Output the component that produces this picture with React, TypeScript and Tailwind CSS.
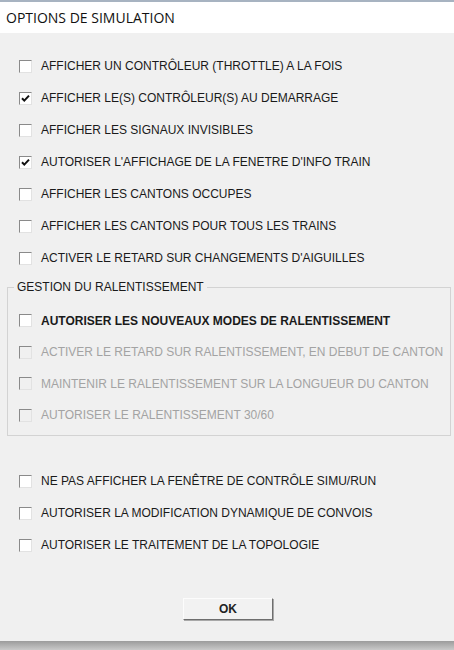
import React from 'react';

type Opt = { label: string; checked?: boolean; disabled?: boolean; strong?: boolean };

const topOptions: Opt[] = [
  { label: 'AFFICHER UN CONTRÔLEUR (THROTTLE) A LA FOIS' },
  { label: 'AFFICHER LE(S) CONTRÔLEUR(S) AU DEMARRAGE', checked: true },
  { label: 'AFFICHER LES SIGNAUX INVISIBLES' },
  { label: "AUTORISER L'AFFICHAGE DE LA FENETRE D'INFO TRAIN", checked: true },
  { label: 'AFFICHER LES CANTONS OCCUPES' },
  { label: 'AFFICHER LES CANTONS POUR TOUS LES TRAINS' },
  { label: "ACTIVER LE RETARD SUR CHANGEMENTS D'AIGUILLES" },
];

const groupOptions: Opt[] = [
  { label: 'AUTORISER LES NOUVEAUX MODES DE RALENTISSEMENT', strong: true },
  { label: 'ACTIVER LE RETARD SUR RALENTISSEMENT, EN DEBUT DE CANTON', disabled: true },
  { label: 'MAINTENIR LE RALENTISSEMENT SUR LA LONGUEUR DU CANTON', disabled: true },
  { label: 'AUTORISER LE RALENTISSEMENT 30/60', disabled: true },
];

const bottomOptions: Opt[] = [
  { label: 'NE PAS AFFICHER LA FENÊTRE DE CONTRÔLE SIMU/RUN' },
  { label: 'AUTORISER LA MODIFICATION DYNAMIQUE DE CONVOIS' },
  { label: 'AUTORISER LE TRAITEMENT DE LA TOPOLOGIE' },
];

function Box({ checked, disabled }: { checked?: boolean; disabled?: boolean }) {
  return (
    <span
      className={
        'flex h-[13px] w-[13px] shrink-0 items-center justify-center border border-t-[#8a8a8a] border-l-[#8a8a8a] border-r-[#e2e2e2] border-b-[#e2e2e2] ' +
        (disabled ? 'bg-[#f0f0f0]' : 'bg-white')
      }
    >
      {checked && (
        <svg width="9" height="9" viewBox="0 0 9 9">
          <path d="M1 4.2 L3.3 6.6 L8 1.6" fill="none" stroke="#111" strokeWidth="2" />
        </svg>
      )}
    </span>
  );
}

function Row({ opt, h }: { opt: Opt; h: string }) {
  return (
    <div className={'flex items-center gap-[9px] pl-[19px] ' + h}>
      <Box checked={opt.checked} disabled={opt.disabled} />
      <span
        className={
          'whitespace-nowrap text-[12px] leading-none ' +
          (opt.disabled ? 'text-[#a3a3a3]' : opt.strong ? 'font-bold text-[#1a1a1a]' : 'text-[#1a1a1a]')
        }
      >
        {opt.label}
      </span>
    </div>
  );
}

export default function App() {
  return (
    <div className="flex h-[650px] w-[454px] flex-col overflow-hidden bg-[#f0f0f0] font-['Liberation_Sans',Arial,sans-serif]">
      <div className="h-[2px] bg-[#a7b3c1]" />
      <div className="flex h-[31px] items-center bg-white pb-[1px] pl-[6px] font-['Open_Sans','Noto_Sans',sans-serif] text-[14px] text-[#111]">
        OPTIONS DE SIMULATION
      </div>

      <div className="flex flex-1 flex-col pt-[17px]">
        {topOptions.map((o) => (
          <Row key={o.label} opt={o} h="h-[32px]" />
        ))}

        <fieldset className="mx-[7px] mt-[6px] w-[444px] border border-[#d3d3d3] px-0 pb-[4px]">
          <legend className="ml-[6px] px-[3px] text-[12px] leading-[14px] text-[#1a1a1a]">
            GESTION DU RALENTISSEMENT
          </legend>
          <div className="-ml-[8px] pt-[11px]">
            {groupOptions.map((o) => (
              <Row key={o.label} opt={o} h="h-[31.5px]" />
            ))}
          </div>
        </fieldset>

        <div className="pt-[29px]">
          {bottomOptions.map((o) => (
            <Row key={o.label} opt={o} h="h-[32px]" />
          ))}
        </div>

        <div className="flex justify-center pt-[37px] pl-[2px]">
          <button className="flex h-[22px] w-[90px] items-center justify-center border border-t-[#fcfcfc] border-l-[#fcfcfc] border-r-[#6e6e6e] border-b-[#6e6e6e] bg-[#f2f2f2] text-[12px] font-bold text-[#222] shadow-[1px_1px_0_#a8a8a8]">
            OK
          </button>
        </div>
      </div>

      <div className="h-[9px] bg-gradient-to-b from-[#9c9c9c] to-[#c9c9c9]" />
    </div>
  );
}
